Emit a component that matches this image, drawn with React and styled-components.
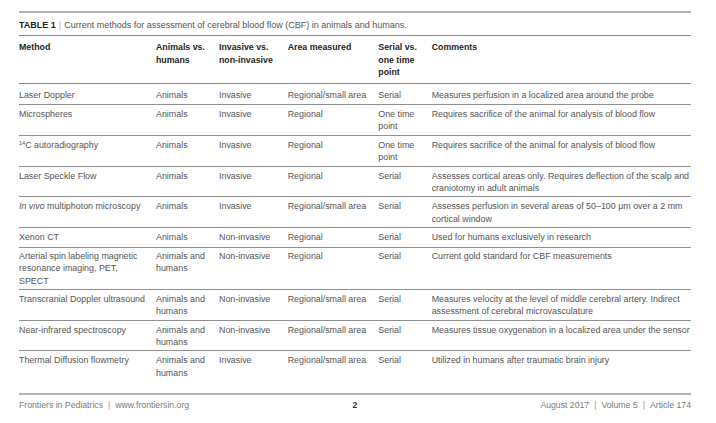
import React from "react";
import styled, { createGlobalStyle } from "styled-components";

const Global = createGlobalStyle`
  html, body { margin: 0; padding: 0; background: #fff; }
  body { font-family: "Liberation Sans", Arial, sans-serif; -webkit-font-smoothing: antialiased; }
`;

const Page = styled.div`
  width: 716px;
  height: 423px;
  box-sizing: border-box;
  padding: 11px 25px 0 19px;
  display: flex;
  flex-direction: column;
`;

const Caption = styled.div`
  border-top: 2px solid #b4b4b4;
  border-bottom: 1px solid #8c8c8c;
  padding: 6px 0 4px;
  font-size: 9px;
  line-height: 12px;
  color: #555;
`;

const CapLabel = styled.b`
  color: #222;
  font-weight: 700;
`;

const Pipe = styled.span`
  color: ${(p) => p.$color || "#999"};
  margin: 0 ${(p) => p.$gap || 3}px;
`;

const cols = "137px 63px 68.7px 90.6px 53.4px 1fr";

const HeadRow = styled.div`
  display: grid;
  grid-template-columns: ${cols};
  padding: 5px 0 4.5px;
  border-bottom: 1px solid #8c8c8c;
  font-size: 8.8px;
  line-height: 12.5px;
  font-weight: 700;
  color: #262626;
`;

const Row = styled.div`
  display: grid;
  grid-template-columns: ${cols};
  padding: ${(p) =>
    p.$first ? "5px 0 1px" : p.$compact ? "1.5px 0 1.9px" : "3px 0 2px"};
  min-height: 14px;
  border-top: ${(p) => (p.$first ? "none" : "1px solid #909090")};
  font-size: 8.9px;
  line-height: 12.4px;
  color: #555;
  box-sizing: content-box;
`;

const Cell = styled.div`
  padding-right: ${(p) => (p.$last ? 0 : p.$wide ? 8 : 4)}px;
  margin-right: ${(p) => (p.$last ? -3 : 0)}px;
`;

const Sup = styled.sup`
  font-size: 5.5px;
  vertical-align: top;
  line-height: 8px;
`;

const TableEnd = styled.div`
  height: 12px;
`;

const Footer = styled.div`
  border-top: 2px solid #b4b4b4;
  display: grid;
  grid-template-columns: 1fr auto 1fr;
  align-items: center;
  padding-top: 3.5px;
  font-size: 8.7px;
  line-height: 12px;
  color: #7a7a7a;
`;

const FootRight = styled.div`
  justify-self: end;
`;

const PageNum = styled.b`
  color: #333;
  font-weight: 700;
  justify-self: center;
`;

const rows = [
  ["Laser Doppler", "Animals", "Invasive", "Regional/small area", "Serial", "Measures perfusion in a localized area around the probe"],
  ["Microspheres", "Animals", "Invasive", "Regional", "One time point", "Requires sacrifice of the animal for analysis of blood flow"],
  [<><Sup>14</Sup>C autoradiography</>, "Animals", "Invasive", "Regional", "One time point", "Requires sacrifice of the animal for analysis of blood flow"],
  ["Laser Speckle Flow", "Animals", "Invasive", "Regional", "Serial", "Assesses cortical areas only. Requires deflection of the scalp and craniotomy in adult animals"],
  [<><i>In vivo</i> multiphoton microscopy</>, "Animals", "Invasive", "Regional/small area", "Serial", "Assesses perfusion in several areas of 50–100 μm over a 2 mm cortical window"],
  ["Xenon CT", "Animals", "Non-invasive", "Regional", "Serial", "Used for humans exclusively in research"],
  ["Arterial spin labeling magnetic resonance imaging, PET, SPECT", "Animals and humans", "Non-invasive", "Regional", "Serial", "Current gold standard for CBF measurements"],
  ["Transcranial Doppler ultrasound", "Animals and humans", "Non-invasive", "Regional/small area", "Serial", "Measures velocity at the level of middle cerebral artery. Indirect assessment of cerebral microvasculature"],
  ["Near-infrared spectroscopy", "Animals and humans", "Non-invasive", "Regional/small area", "Serial", "Measures tissue oxygenation in a localized area under the sensor"],
  ["Thermal Diffusion flowmetry", "Animals and humans", "Invasive", "Regional/small area", "Serial", "Utilized in humans after traumatic brain injury"],
];

export default function App() {
  return (
    <>
      <Global />
      <Page>
        <Caption>
          <CapLabel>TABLE 1</CapLabel>
          <Pipe $color="#d9a766" $gap={3}>|</Pipe>
          Current methods for assessment of cerebral blood flow (CBF) in animals and humans.
        </Caption>
        <HeadRow>
          <Cell $wide>Method</Cell>
          <Cell>Animals vs. humans</Cell>
          <Cell>Invasive vs. non-invasive</Cell>
          <Cell>Area measured</Cell>
          <Cell>Serial vs. one time point</Cell>
          <Cell $last>Comments</Cell>
        </HeadRow>
        {rows.map((r, i) => (
          <Row key={i} $first={i === 0} $compact={i === 6}>
            {r.map((c, j) => (
              <Cell key={j} $wide={j === 0} $last={j === 5}>
                {c}
              </Cell>
            ))}
          </Row>
        ))}
        <TableEnd />
        <Footer>
          <div>
            Frontiers in Pediatrics<Pipe $gap={5}>|</Pipe>www.frontiersin.org
          </div>
          <PageNum>2</PageNum>
          <FootRight>
            August 2017<Pipe $color="#c98c8c" $gap={5}>|</Pipe>Volume 5<Pipe $gap={5}>|</Pipe>Article 174
          </FootRight>
        </Footer>
      </Page>
    </>
  );
}
